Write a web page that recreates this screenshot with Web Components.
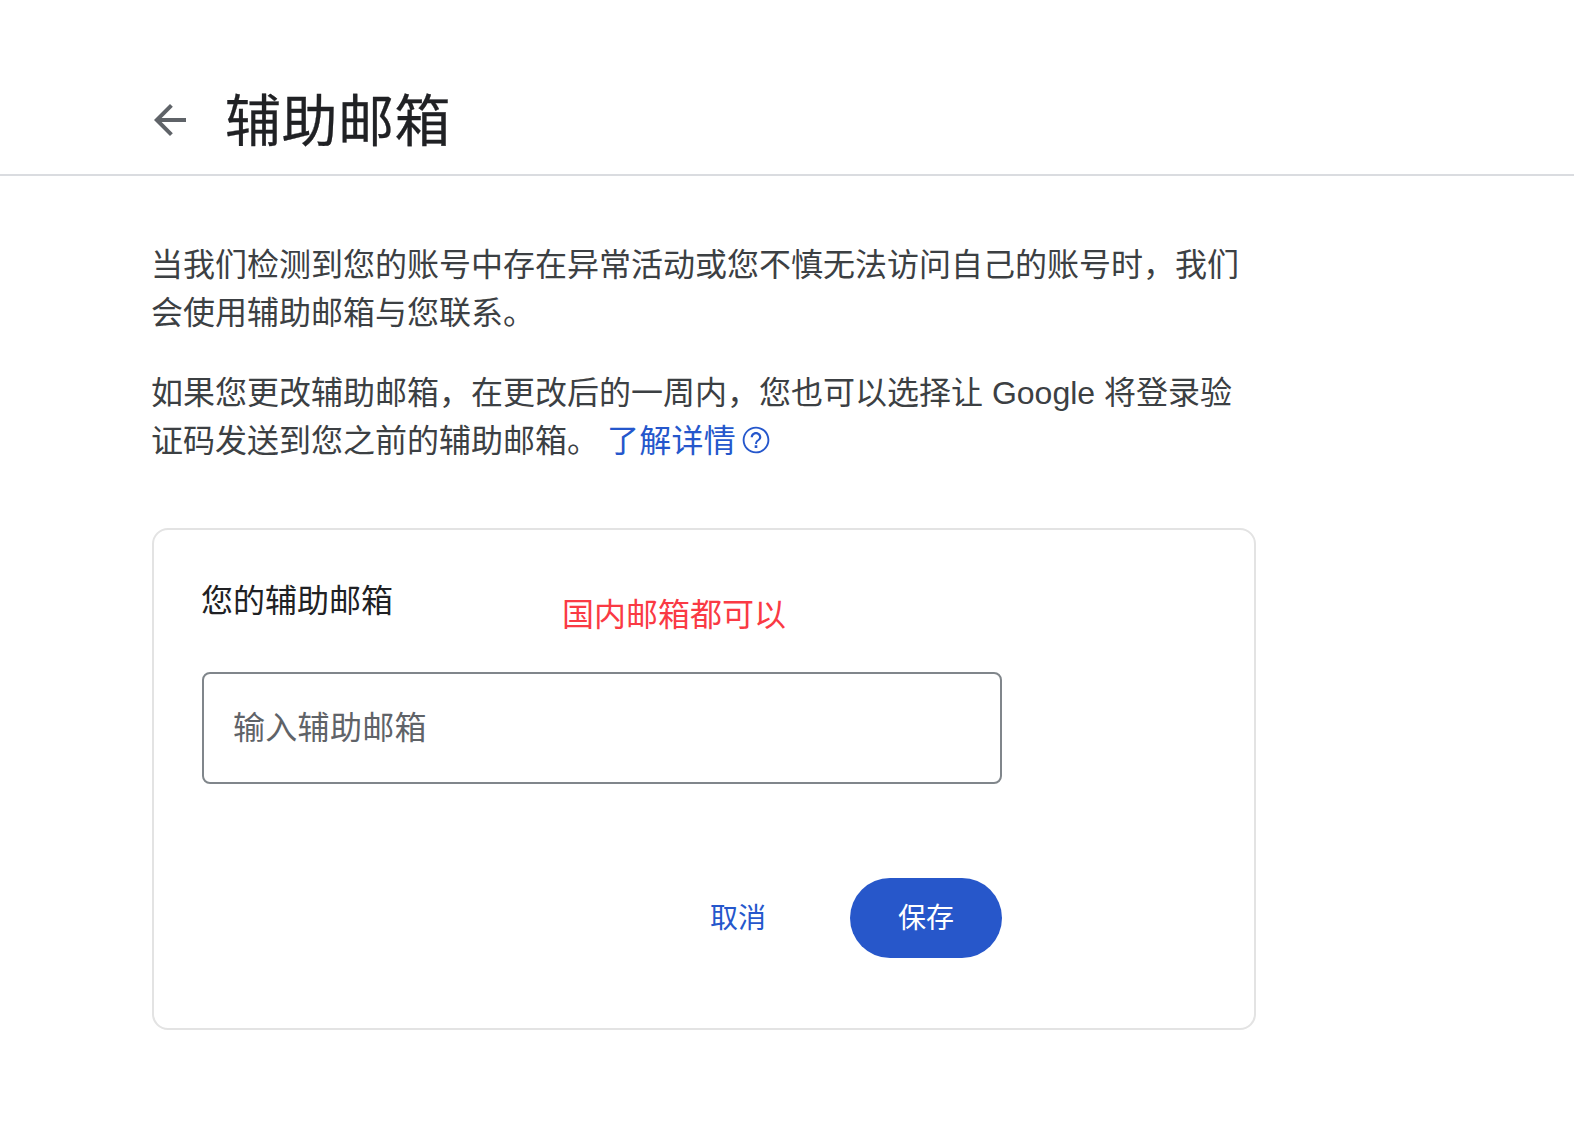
<!DOCTYPE html>
<html lang="zh">
<head>
<meta charset="utf-8">
<title>辅助邮箱</title>
<style>
html, body { margin: 0; background: #fff; }
body { font-family: "Liberation Sans", "Noto Sans CJK SC", sans-serif; }
</style>
</head>
<body>
<page-header>辅助邮箱</page-header>
<page-intro></page-intro>
<recovery-card></recovery-card>
<script>
const headerTemplate = document.createElement('template');
headerTemplate.innerHTML = `
<style>
:host{
    display: block;
    height: 174px;
    border-bottom: 2px solid #dadce0;
    box-sizing: content-box;
}
.bar{
    display: flex;
    align-items: center;
    height: 100%;
    padding: 66px 0 0 146px;
    box-sizing: border-box;
}
svg{
    width: 48px;
    height: 48px;
    margin-right: 31px;
    fill: #5f6368;
    flex: none;
}
h1{
    margin: 4px 0 0;
    font: 400 56px/80px "Liberation Sans", "Noto Sans CJK SC", sans-serif;
    letter-spacing: 0.5px;
    color: #202124;
    -webkit-text-stroke: 0.3px #202124;
}
</style>
<div class="bar">
    <svg viewBox="0 0 24 24"><path d="M20 11H7.83l5.59-5.59L12 4l-8 8 8 8 1.41-1.41L7.83 13H20v-2z"/></svg>
    <h1><slot></slot></h1>
</div>
`;

class PageHeader extends HTMLElement {
    constructor() {
        super();
        this.attachShadow({ mode: 'open' }).appendChild(headerTemplate.content.cloneNode(true));
    }
}
customElements.define('page-header', PageHeader);

const introTemplate = document.createElement('template');
introTemplate.innerHTML = `
<style>
:host{
    display: block;
    width: 1104px;
    margin: 65px 0 0 151px;
    font: 400 32px/48px "Liberation Sans", "Noto Sans CJK SC", sans-serif;
    color: #3c4043;
}
p{ margin: 0 0 32px; }
a{
    color: #2557cc;
    text-decoration: none;
    letter-spacing: 0.3px;
    margin-left: -1px;
}
svg{
    width: 32px;
    height: 32px;
    vertical-align: -4px;
    margin-left: 4px;
    fill: #2557cc;
}
</style>
<p>当我们检测到您的账号中存在异常活动或您不慎无法访问自己的账号时，我们会使用辅助邮箱与您联系。</p>
<p>如果您更改辅助邮箱，在更改后的一周内，您也可以选择让 Google 将登录验证码发送到您之前的辅助邮箱。 <a href="#">了解详情<svg viewBox="0 0 24 24"><path d="M11 18h2v-2h-2v2zm1-16C6.48 2 2 6.48 2 12s4.48 10 10 10 10-4.48 10-10S17.52 2 12 2zm0 18.6c-4.74 0-8.6-3.86-8.6-8.6S7.26 3.4 12 3.400s8.6 3.86 8.6 8.6-3.86 8.6-8.6 8.600zM12 6c-2.210 0-4 1.790-4 4h1.700c0-1.270 1.030-2.300 2.300-2.300s2.300 1.030 2.300 2.300c0 2-3 1.750-3 5h1.400c0-2.250 3.300-2.500 3.300-5 0-2.210-1.790-4-4-4z"/></svg></a></p>
`;

class PageIntro extends HTMLElement {
    constructor() {
        super();
        this.attachShadow({ mode: 'open' }).appendChild(introTemplate.content.cloneNode(true));
    }
}
customElements.define('page-intro', PageIntro);

const cardTemplate = document.createElement('template');
cardTemplate.innerHTML = `
<style>
:host{
    display: block;
    position: relative;
    box-sizing: border-box;
    width: 1104px;
    height: 502px;
    margin: 63px 0 0 152px;
    padding: 47px 48px 48px;
    border: 2px solid #e3e3e3;
    border-radius: 16px;
    font-family: "Liberation Sans", "Noto Sans CJK SC", sans-serif;
}
.label{
    font-size: 32px;
    line-height: 48px;
    color: #202124;
    margin-left: -1px;
}
.note{
    position: absolute;
    left: 408px;
    top: 61px;
    font-size: 32px;
    line-height: 48px;
    color: #fa3a44;
}
.field{
    width: 800px;
    height: 112px;
    margin-top: 47px;
    box-sizing: border-box;
    border: 2px solid #80868b;
    border-radius: 8px;
    padding: 0 30px 6px 29px;
    display: flex;
    align-items: center;
    font-size: 32px;
    letter-spacing: 0.3px;
    color: #5f6368;
}
.actions{
    width: 800px;
    display: flex;
    justify-content: flex-end;
    align-items: center;
    margin-top: 94px;
}
.cancel{
    font-size: 28px;
    color: #2557cc;
    margin-right: 84px;
    padding-bottom: 4px;
}
.save{
    width: 152px;
    height: 80px;
    border-radius: 40px;
    background: #2757ca;
    color: #fff;
    font-size: 28px;
    padding-bottom: 4px;
    box-sizing: border-box;
    display: flex;
    align-items: center;
    justify-content: center;
}
</style>
<div class="label">您的辅助邮箱</div>
<div class="note">国内邮箱都可以</div>
<div class="field">输入辅助邮箱</div>
<div class="actions">
    <span class="cancel">取消</span>
    <span class="save">保存</span>
</div>
`;

class RecoveryCard extends HTMLElement {
    constructor() {
        super();
        this.attachShadow({ mode: 'open' }).appendChild(cardTemplate.content.cloneNode(true));
    }
}
customElements.define('recovery-card', RecoveryCard);
</script>
</body>
</html>
